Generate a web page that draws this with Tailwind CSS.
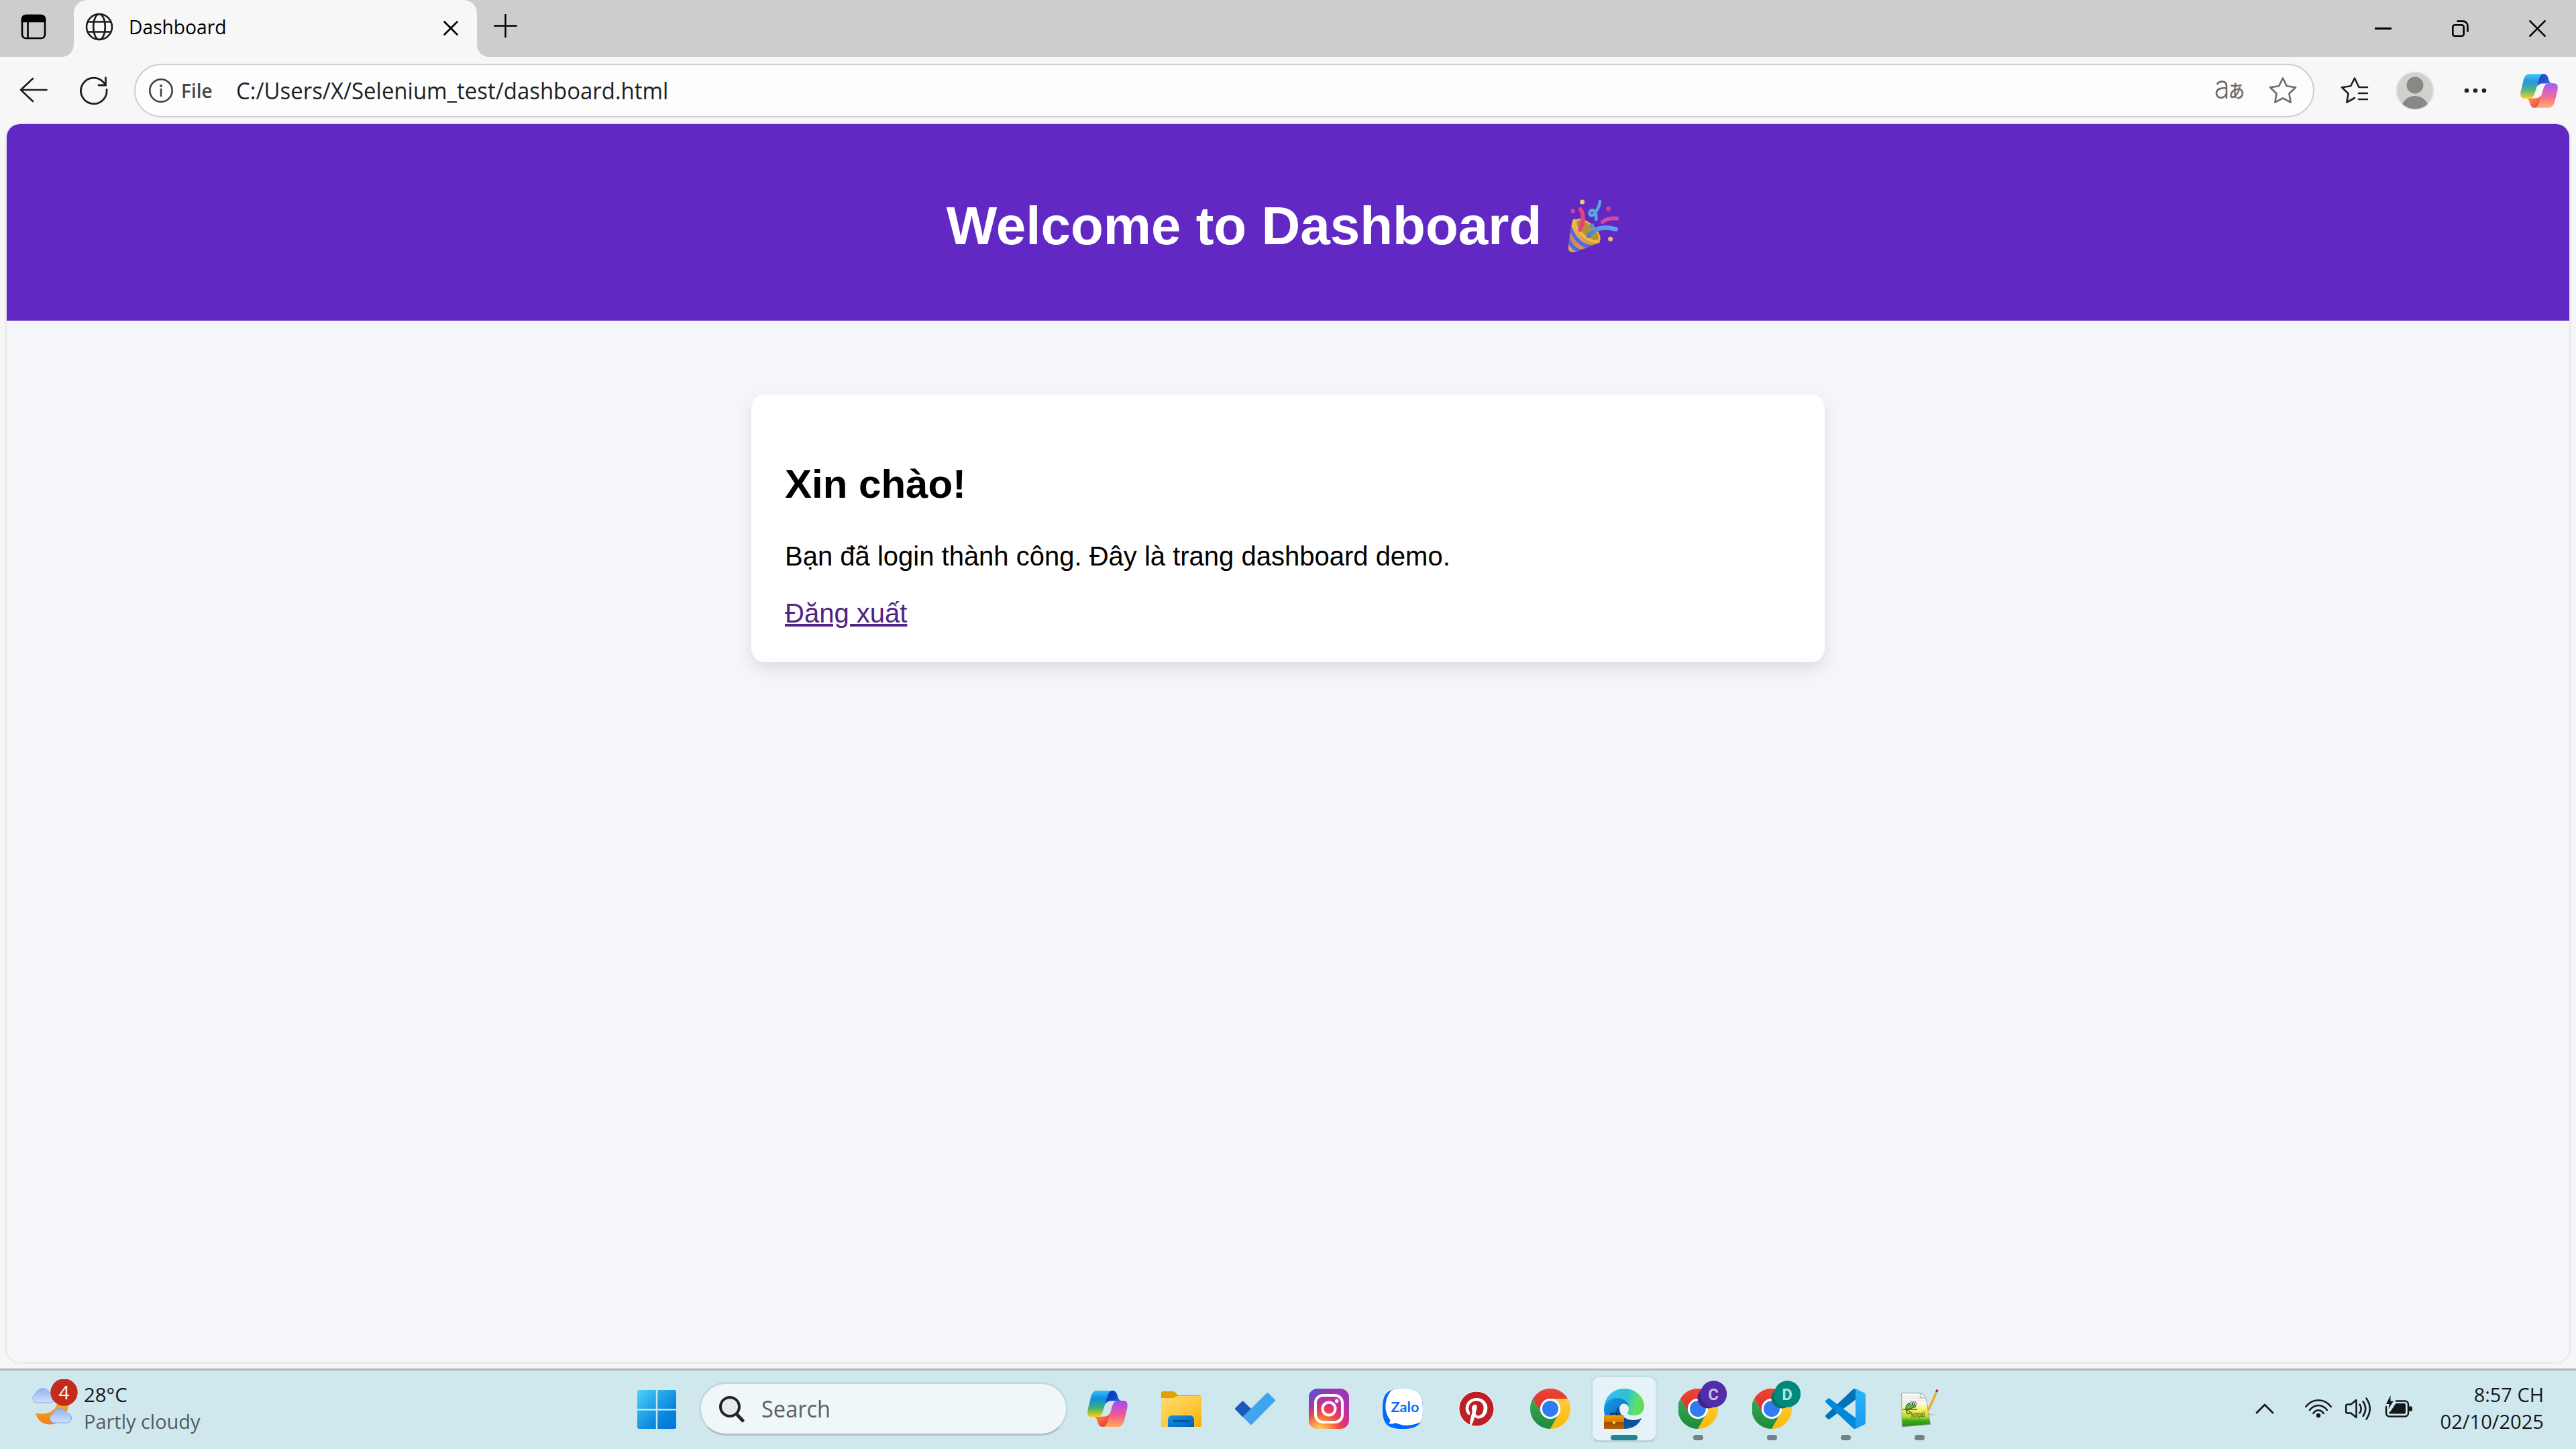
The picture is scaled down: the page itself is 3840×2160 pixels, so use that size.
<!DOCTYPE html>
<html lang="vi">
<head>
<meta charset="utf-8">
<title>Dashboard</title>
<script src="https://cdn.jsdelivr.net/npm/@tailwindcss/browser@4"></script>
</head>
<body class="w-[3840px] h-[2160px] overflow-hidden bg-[#f7f7f7] font-['Open_Sans','Noto_Sans',sans-serif] text-black flex flex-col">

<svg width="0" height="0" class="absolute">
  <defs>
    <linearGradient id="cpL" x1="0" y1="0" x2="0" y2="1"><stop offset="0" stop-color="#35c0f7"/><stop offset=".3" stop-color="#0e8fe0"/><stop offset=".65" stop-color="#3fae78"/><stop offset="1" stop-color="#ffcd0c"/></linearGradient>
    <linearGradient id="cpB" x1="0" y1="0" x2="1" y2="1"><stop offset="0" stop-color="#0a35c4"/><stop offset=".5" stop-color="#1142c8"/><stop offset="1" stop-color="#1c86ee"/></linearGradient>
    <linearGradient id="cpR" x1="0" y1="0" x2="0" y2="1"><stop offset="0" stop-color="#a04be9"/><stop offset=".25" stop-color="#c252cf"/><stop offset=".55" stop-color="#f25b8c"/><stop offset="1" stop-color="#ffab5c"/></linearGradient>
    <linearGradient id="cpO" x1="0" y1="0" x2="1" y2="1"><stop offset="0" stop-color="#ff9b4a"/><stop offset=".5" stop-color="#fb6338"/><stop offset="1" stop-color="#cf3238"/></linearGradient>
    <symbol id="copilot" viewBox="0 0 60 54">
      <path fill="url(#cpB)" d="M37 0C42 0 43.500 3 45 8C46.300 13 48 15 52 15.300H36C31 15.300 29 17 27 20L27 6C29 2 32 0 37 0Z"/>
      <path fill="url(#cpO)" d="M23 54C18 54 16.500 51 15 46C13.700 41 12 39 8 38.700H24C29 38.700 31 37 33 34V48C31 52 28 54 23 54Z"/>
      <path fill="url(#cpL)" d="M14.500 0H38C33.500 0 31.600 3 30 8L23 31C21 37 18.500 39 14 39H6C.8 39-.4 34.500.6 28L5.500 8C7.500 2.500 10 0 14.500 0Z"/>
      <path fill="url(#cpR)" d="M45.500 54H22C26.500 54 28.400 51 30 46L37 23C39 17 41.500 15 46 15H54C59.200 15 60.400 19.500 59.400 26L54.500 46C52.500 51.500 50 54 45.500 54Z"/>
    </symbol>
    <linearGradient id="chR" x1="0" y1="0" x2="0" y2="1"><stop offset="0" stop-color="#ee4436"/><stop offset="1" stop-color="#d8302a"/></linearGradient>
    <linearGradient id="chG" x1="0" y1="0" x2="0" y2="1"><stop offset="0" stop-color="#37a952"/><stop offset="1" stop-color="#1e8a3c"/></linearGradient>
    <linearGradient id="chY" x1="0" y1="0" x2="0" y2="1"><stop offset="0" stop-color="#ffcc3e"/><stop offset="1" stop-color="#fcb905"/></linearGradient>
    <symbol id="chrome" viewBox="0 0 60 60">
      <path fill="url(#chR)" d="M4 15A30 30 0 0 1 56 15H30A15 15 0 0 0 17 37.500Z"/>
      <path fill="url(#chG)" d="M4 15A30 30 0 0 0 30 60L43 37.500A15 15 0 0 1 17 37.500Z"/>
      <path fill="url(#chY)" d="M56 15A30 30 0 0 1 30 60L43 37.500A15 15 0 0 0 30 15Z"/>
      <circle cx="30" cy="30" r="15" fill="#fff"/><circle cx="30" cy="30" r="12" fill="#2f7cf0"/>
    </symbol>
    <linearGradient id="cloudFill" x1="0" y1="0" x2="0" y2="1"><stop offset="0" stop-color="#8fb3f3"/><stop offset="1" stop-color="#d3e0f8"/></linearGradient>
    <symbol id="cloud" viewBox="0 0 36 23">
      <path fill="url(#cloudFill)" stroke="#86a8ea" stroke-width="1" d="M8 22A7 7 0 0 1 6.500 8.500A10.500 10.500 0 0 1 26.500 7.500A7.300 7.300 0 0 1 28 22Z"/>
    </symbol>
  </defs>
</svg>

<!-- Tab strip -->
<div class="h-[85px] shrink-0 bg-[#cdcdcd] flex items-stretch">
  <div class="w-[110px] flex items-center pl-[31px] relative">
    <svg class="w-[38px] h-[38px] -mt-[5px]" viewBox="0 0 38 38" fill="none" stroke="#000" stroke-width="2.600"><rect x="2" y="2" width="34" height="34" rx="5.500"/><path d="M2 11V7.500A5.500 5.500 0 0 1 7.500 2H30.500A5.500 5.500 0 0 1 36 7.500V11Z" fill="#000"/><path d="M10.500 11V36"/></svg>
    <svg class="absolute right-0 bottom-0 w-[16px] h-[20px]" viewBox="0 0 16 20"><path fill="#f7f7f7" d="M16 0V20H0C10 18 16 11 16 0Z"/></svg>
  </div>
  <div class="w-[601px] bg-[#f7f7f7] rounded-t-[20px] flex items-center pl-[17px] pr-[27px] pb-[5px]">
    <svg class="w-[42px] h-[42px]" viewBox="0 0 42 42" fill="none" stroke="#1b1b1b" stroke-width="2.600"><circle cx="21" cy="21" r="19"/><ellipse cx="21" cy="21" rx="8.800" ry="19"/><path d="M3.500 13.500H38.500M3.500 28.500H38.500"/></svg>
    <div class="ml-[23px] w-[300px] text-[30px] leading-[40px] whitespace-nowrap origin-left scale-x-[0.94]">Dashboard</div>
    <svg class="ml-auto w-[24px] h-[24px] mt-[3px]" viewBox="0 0 24 24" stroke="#000" stroke-width="2.600" stroke-linecap="round"><path d="M2.500 2.500L21.500 21.500M21.500 2.500L2.500 21.500"/></svg>
  </div>
  <div class="flex-1 flex items-center pl-[25px] relative">
    <svg class="absolute left-0 bottom-0 w-[16px] h-[20px]" viewBox="0 0 16 20"><path fill="#f7f7f7" d="M0 0V20H16C6 18 0 11 0 0Z"/></svg>
    <svg class="w-[35px] h-[35px] -mt-[8px]" viewBox="0 0 35 35" stroke="#000" stroke-width="2.500" stroke-linecap="round"><path d="M17.500 1V34M1 17.500H34"/></svg>
    <div class="ml-auto flex items-center gap-[90px] pr-[45px]">
      <svg class="w-[25px] h-[25px]" viewBox="0 0 25 25"><rect y="11" width="25" height="3"/></svg>
      <svg class="w-[25px] h-[25px]" viewBox="0 0 25 25" fill="none" stroke="#000" stroke-width="2.600"><rect x="1.300" y="7.300" width="16.400" height="16.400" rx="3"/><path d="M7.500 1.600H16.500A7 7 0 0 1 23.500 8.600V17.500"/></svg>
      <svg class="w-[25px] h-[25px]" viewBox="0 0 25 25" stroke="#000" stroke-width="2.600"><path d="M.5.5L24.500 24.500M24.500.5L.5 24.500"/></svg>
    </div>
  </div>
</div>

<!-- Toolbar -->
<div class="h-[100px] shrink-0 flex items-center pl-[29px] pr-[27px]">
  <svg class="w-[42px] h-[38px] -mt-[3px]" viewBox="0 0 42 38" fill="none" stroke="#1f1f1f" stroke-width="2.600" stroke-linecap="round" stroke-linejoin="round"><path d="M40.500 19H2M20 2L2 19L20 36"/></svg>
  <svg class="w-[42px] h-[42px] ml-[48px]" viewBox="0 0 42 42" fill="none" stroke="#1f1f1f" stroke-width="2.800" stroke-linecap="round"><path d="M40 19.500A19.300 19.300 0 1 1 36 9.500L38.500 13M38.500 2V13H28"/></svg>
  <div class="ml-[39px] w-[3250px] h-[80px] rounded-full border-[2.500px] border-[#cecece] bg-[#fdfdfd] flex items-center pl-[19px] pr-[24px] text-[#1f1f1f]">
    <svg class="w-[38px] h-[38px]" viewBox="0 0 38 38" fill="none" stroke="#3f3f3f" stroke-width="2.600"><circle cx="19" cy="19" r="16.700"/><path d="M19 17V27" stroke-linecap="round"/><circle cx="19" cy="12" r="1.900" fill="#3f3f3f" stroke="none"/></svg>
    <div class="ml-[11px] w-[82px] text-[28.500px] leading-[40px] font-semibold text-[#484848] origin-left scale-x-[0.98]">File</div>
    <div class="text-[35px] leading-[48px] whitespace-nowrap origin-left scale-x-[0.941]">C:/Users/X/Selenium_test/dashboard.html</div>
    <svg class="ml-auto w-[46px] h-[34px] shrink-0 -mt-[2px]" viewBox="0 0 46 34" fill="none" stroke="#6b6b6b" stroke-width="2.700" stroke-linecap="round"><path d="M3.500 8C6 3.500 17 2.500 17 11V29M17 14C7 14 2 16 2 22C2 31 15 30.500 17 22"/><text x="20" y="29" font-size="27" fill="#6b6b6b" stroke="#6b6b6b" stroke-width=".6" textLength="24" lengthAdjust="spacingAndGlyphs" font-family="Noto Sans CJK JP, sans-serif">あ</text></svg>
    <svg class="w-[42px] h-[42px] shrink-0 ml-[34px]" viewBox="0 0 42 42" fill="none" stroke="#6b6b6b" stroke-width="2.600" stroke-linejoin="round"><path d="M21 2.500L26.800 14.300L40 16.300L30.400 25.500L32.700 38.500L21 32.300L9.300 38.500L11.600 25.500L2 16.300L15.200 14.300Z"/></svg>
  </div>
  <svg class="w-[42px] h-[42px] ml-[39px]" viewBox="0 0 42 42" fill="none" stroke="#1f1f1f" stroke-width="2.600" stroke-linejoin="round" stroke-linecap="round"><path d="M40 16H27.500L21 2.500L15.200 14.300L2 16.300L11.600 25.500L9.300 38.500L21 32M27 25H40M27 34H40"/></svg>
  <svg class="w-[58px] h-[66px] ml-[40px]" viewBox="0 0 58 66"><defs><clipPath id="av"><circle cx="29" cy="33" r="27.500"/></clipPath></defs><ellipse cx="29" cy="33" rx="28.500" ry="28.500" fill="#e2e1df"/><circle cx="29" cy="33" r="26.500" fill="#d2d0cd"/><g clip-path="url(#av)" fill="#8a8886"><circle cx="29" cy="25" r="12.500"/><circle cx="29" cy="62" r="21"/></g></svg>
  <svg class="w-[34px] h-[10px] ml-[44px]" viewBox="0 0 34 10" fill="#1f1f1f"><circle cx="4" cy="5" r="3.300"/><circle cx="17" cy="5" r="3.300"/><circle cx="30" cy="5" r="3.300"/></svg>
  <svg class="w-[56px] h-[51px] ml-auto opacity-90"><use href="#copilot"/></svg>
</div>

<!-- Page -->
<div class="h-[1855px] shrink-0 px-[10px] pb-[9px]">
  <div class="h-full rounded-[20px] overflow-hidden bg-[#f4f6fa] shadow-[0_0_3px_1px_rgba(0,0,0,0.12)] font-['Liberation_Sans',Arial,sans-serif]">
    <header class="h-[293px] bg-[#6128c3] text-white flex justify-center pt-[106px] pr-[3px]">
      <h1 class="text-[80px] leading-[92px] font-bold whitespace-nowrap">Welcome to Dashboard</h1>
      <svg class="w-[100px] h-[100px] ml-[28px] -mt-[6px] shrink-0" viewBox="0 0 300 300" fill="none" stroke-linecap="round">
        <defs>
          <linearGradient id="cone" x1="0" y1="0" x2="1" y2="1"><stop offset="0" stop-color="#f6c544"/><stop offset="1" stop-color="#c57f58"/></linearGradient>
          <clipPath id="coneClip"><path d="M62 124C52 125 50 150 36 250C34 268 44 276 62 273C100 262 140 240 176 232C190 224 110 130 62 124Z"/></clipPath>
          <linearGradient id="bl" x1="0" y1="1" x2="1" y2="0"><stop offset="0" stop-color="#4880cc"/><stop offset="1" stop-color="#62a8ee"/></linearGradient>
        </defs>
        <g clip-path="url(#coneClip)">
          <rect x="30" y="115" width="160" height="165" fill="url(#cone)"/>
          <path stroke="#d38a55" stroke-width="18" d="M36 190C60 240 100 262 150 250"/>
          <path stroke="#5068e4" stroke-width="16" d="M46 166C62 212 98 250 140 248"/>
          <path stroke="#5068e4" stroke-width="17" d="M34 208C44 240 64 262 90 268"/>
        </g>
        <ellipse cx="121" cy="177" rx="34" ry="72" transform="rotate(-48 121 177)" fill="#eebb42"/>
        <ellipse cx="122" cy="174" rx="24" ry="62" transform="rotate(-48 122 174)" fill="#b98c36"/>
        <path stroke="#e0457f" stroke-width="19" d="M90 81C106 105 104 140 88 172"/>
        <path stroke="url(#bl)" stroke-width="20" d="M126 200C150 166 190 155 248 170"/>
        <path stroke="#d848a0" stroke-width="17" d="M188 138C205 124 225 119 253 122"/>
        <path stroke="#58a6da" stroke-width="14" d="M177 45C174 75 150 112 136 108C124 100 134 82 148 86C160 90 160 108 160 126"/>
        <circle cx="98" cy="48" r="10.500" fill="#f0d060"/><circle cx="56" cy="89" r="10.500" fill="#cf3fa0"/>
        <circle cx="215" cy="79" r="10.500" fill="#cc3f98"/><circle cx="141" cy="155" r="10" fill="#4f93d0"/>
        <circle cx="224" cy="214" r="10.500" fill="#efbf5c"/>
      </svg>
    </header>
    <main class="w-[1600px] h-[399px] mx-auto mt-[110px] rounded-[20px] bg-white px-[50px] pt-[100px] shadow-[0_10px_25px_rgba(0,0,0,0.1)]">
      <h2 class="text-[60px] leading-[68px] font-bold">Xin chào!</h2>
      <p class="mt-[50px] text-[40px] leading-[46px]">Bạn đã login thành công. Đây là trang dashboard demo.</p>
      <a class="block w-fit mt-[39px] text-[40px] leading-[46px] text-[#4f2485] underline decoration-[4px] underline-offset-[2px]">Đăng xuất</a>
    </main>
  </div>
</div>

<!-- Taskbar -->
<div class="h-[120px] shrink-0 border-t-[3px] border-[#a9b9be] bg-[#cfe8ee] flex items-start text-[#15181a]">
  <div class="w-[949px] flex pt-[21px] pl-[47px]">
    <svg class="w-[75px] h-[75px] -mt-[8px]" viewBox="0 0 75 75">
      <defs><linearGradient id="moon" x1="0" y1="0" x2="0" y2="1"><stop offset="0" stop-color="#f2c02e"/><stop offset="1" stop-color="#f28118"/></linearGradient></defs>
      <path fill="url(#moon)" d="M54 22C59 50 47 67 27 67.500C15 67 8 60 6 50C26 55 36 46 39 34Z"/>
      <use href="#cloud" x="0" y="13" width="36" height="23"/><use href="#cloud" x="25.500" y="43" width="36" height="23"/>
      <circle cx="48.500" cy="19.500" r="20.200" fill="#c42b1c"/>
      <text x="48.500" y="30" font-size="28" text-anchor="middle" fill="#fff">4</text>
    </svg>
    <div class="ml-[3px] text-[30px] leading-[40px] -mt-[5px] whitespace-nowrap origin-left">
      <div class="origin-left scale-x-[0.98]">28°C</div>
      <div class="text-[#505c60] origin-left scale-x-[0.965]">Partly cloudy</div>
    </div>
  </div>
  <svg class="w-[60px] h-[60px] mt-[28px]" viewBox="0 0 60 60">
    <defs><linearGradient id="win" gradientUnits="userSpaceOnUse" x1="0" y1="0" x2="60" y2="60"><stop offset="0" stop-color="#4fd4ff"/><stop offset=".35" stop-color="#28a9ea"/><stop offset=".7" stop-color="#0a82dc"/><stop offset="1" stop-color="#0075d2"/></linearGradient></defs>
    <path fill="url(#win)" d="M4 1H28.800V29H1V4A3 3 0 0 1 4 1ZM31.200 1H56A3 3 0 0 1 59 4V29H31.200ZM1 31.500H28.800V59H4A3 3 0 0 1 1 56ZM31.200 31.500H59V56A3 3 0 0 1 56 59H31.200Z"/>
  </svg>
  <div class="ml-[33px] mt-[17px] w-[550px] h-[80px] rounded-full border-[3px] border-[#c3d9df] border-b-[#adc1c7] bg-[#eff7f9] flex items-center pl-[26px]">
    <svg class="w-[40px] h-[42px]" viewBox="0 0 40 42" fill="none" stroke="#242424" stroke-width="4"><circle cx="17" cy="18" r="14" fill="#e3ebf0"/><path d="M27 29L36 38.500" stroke-width="5" stroke-linecap="round"/></svg>
    <div class="ml-[24px] text-[35px] leading-[48px] text-[#5b6163] origin-left scale-x-[0.93]">Search</div>
  </div>

  <div class="flex items-start ml-[4px]">
    <div class="w-[110px] h-[117px] flex justify-center pt-[30px]"><svg class="w-[60px] h-[54px]"><use href="#copilot"/></svg></div>
    <div class="w-[110px] h-[117px] flex justify-center pt-[27px]">
      <svg class="w-[60px] h-[60px]" viewBox="0 0 60 60">
        <defs><linearGradient id="fo" x1="0" y1="0" x2="1" y2="1"><stop offset="0" stop-color="#ffdb6e"/><stop offset=".6" stop-color="#fdc63a"/><stop offset="1" stop-color="#f5b000"/></linearGradient><linearGradient id="fb" x1="0" y1="0" x2="1" y2="1"><stop offset="0" stop-color="#1795e0"/><stop offset="1" stop-color="#005fb8"/></linearGradient></defs>
        <path fill="#e0a104" d="M2 4H17C21 4 23 8 24.500 10H58L60 12V30H0V6Q0 4 2 4Z"/>
        <path fill="url(#fo)" d="M0 14H17C20 14 22 11 25 11H58Q60 11 60 13V55Q60 57 58 57H2Q0 57 0 55Z"/>
        <path fill="url(#fb)" d="M10 57V46A6 6 0 0 1 16 40H43A6 6 0 0 1 49 46V57Z"/><path stroke="#0c4a8e" stroke-width="2.400" stroke-linecap="round" d="M19 48.500H41"/>
      </svg>
    </div>
    <div class="w-[110px] h-[117px] flex justify-center pt-[27px]">
      <svg class="w-[60px] h-[60px]" viewBox="0 0 60 60" stroke-linejoin="round" stroke-width="3"><path fill="#185abd" stroke="#185abd" d="M11.500 20L22.500 30.500L12 41L1.500 30Z"/><path fill="#41a5ee" stroke="#41a5ee" d="M13.500 42L48.500 7.500L58.500 17.500L24 52.500Z"/></svg>
    </div>
    <div class="w-[110px] h-[117px] flex justify-center pt-[27px]">
      <svg class="w-[60px] h-[60px]" viewBox="0 0 60 60">
        <defs><radialGradient id="ig1" cx=".28" cy="1.050" r="1"><stop offset="0" stop-color="#ffdf7c"/><stop offset=".15" stop-color="#fdb04c"/><stop offset=".45" stop-color="#f4503c"/><stop offset=".65" stop-color="#d9307f"/><stop offset="1" stop-color="#a234b4"/></radialGradient><linearGradient id="ig2" x1="0" y1="0" x2=".45" y2=".4"><stop offset="0" stop-color="#4560d8"/><stop offset="1" stop-color="#7a35c0" stop-opacity="0"/></linearGradient></defs>
        <rect width="60" height="60" rx="13" fill="url(#ig1)"/><rect width="60" height="60" rx="13" fill="url(#ig2)"/>
        <rect x="10" y="10" width="40" height="40" rx="11" fill="none" stroke="#fff" stroke-width="4"/><circle cx="30" cy="30" r="9.500" fill="none" stroke="#fff" stroke-width="4"/><circle cx="41.700" cy="18.500" r="2.700" fill="#fff"/>
      </svg>
    </div>
    <div class="w-[110px] h-[117px] flex justify-center pt-[27px]">
      <svg class="w-[60px] h-[60px]" viewBox="0 0 60 60">
        <path fill="#0068ff" d="M30 0C53 0 60 7 60 30S53 60 30 60S0 53 0 30S7 0 30 0Z"/>
        <path fill="#fff" d="M13 3C18 0 23 0 30 0C53 0 60 7 60 30C60 40 59 46 56 50C44 56 30 56 19 51C16 52.500 13 53 9 52C11 50 12 48 11 46C1 34 3 14 13 3Z"/>
        <text x="33.500" y="34.500" text-anchor="middle" font-size="20" font-weight="700" fill="#0a6cff" textLength="42" lengthAdjust="spacingAndGlyphs" font-family="Lato, sans-serif">Zalo</text>
      </svg>
    </div>
    <div class="w-[110px] h-[117px] flex justify-center pt-[27px]">
      <svg class="w-[60px] h-[60px]" viewBox="0 0 60 60"><circle cx="30" cy="30" r="26.500" fill="#fff"/><path fill="#bd1f26" transform="translate(4.400 4.400) scale(2.133)" d="M12.017 0C5.396 0 .029 5.367.029 11.987c0 5.079 3.158 9.417 7.618 11.162-.105-.949-.199-2.403.041-3.439.219-.937 1.406-5.957 1.406-5.957s-.359-.72-.359-1.781c0-1.663.967-2.911 2.168-2.911 1.024 0 1.518.769 1.518 1.688 0 1.029-.653 2.567-.992 3.992-.285 1.193.6 2.165 1.775 2.165 2.128 0 3.768-2.245 3.768-5.487 0-2.861-2.063-4.869-5.008-4.869-3.410 0-5.409 2.562-5.409 5.199 0 1.033.394 2.143.889 2.741.099.120.112.225.085.345-.090.375-.293 1.199-.334 1.363-.053.225-.172.271-.401.165-1.495-.690-2.433-2.878-2.433-4.646 0-3.776 2.748-7.252 7.920-7.252 4.158 0 7.392 2.967 7.392 6.923 0 4.135-2.607 7.462-6.233 7.462-1.214 0-2.354-.629-2.758-1.379l-.749 2.848c-.269 1.045-1.004 2.352-1.498 3.146 1.123.345 2.306.535 3.550.535 6.607 0 11.985-5.365 11.985-11.987C23.970 5.390 18.592.026 11.985.026L12.017 0z"/></svg>
    </div>
    <div class="w-[110px] h-[117px] flex justify-center pt-[27px]"><svg class="w-[60px] h-[60px]"><use href="#chrome"/></svg></div>
    <div class="w-[110px] h-[117px] flex justify-center pt-[7px]">
      <div class="w-[100px] h-[100px] rounded-[13px] border-[3px] border-[#c8dfe5] border-b-[#bad1d8] bg-[#e5f2f7] flex flex-col items-center pt-[17px]">
        <svg class="w-[60px] h-[60px] shrink-0" viewBox="0 0 60 60">
          <defs>
            <linearGradient id="eg1" x1="0" y1=".3" x2="1" y2=".5"><stop offset="0" stop-color="#36b9fb"/><stop offset=".55" stop-color="#2cc4d0"/><stop offset=".85" stop-color="#62e066"/><stop offset="1" stop-color="#5fdb55"/></linearGradient>
            <linearGradient id="eg2" x1="0" y1="0" x2=".8" y2="1"><stop offset="0" stop-color="#1b9de2"/><stop offset=".5" stop-color="#0b74cb"/><stop offset="1" stop-color="#0c4f96"/></linearGradient>
            <linearGradient id="bc" x1="0" y1="0" x2="0" y2="1"><stop offset="0" stop-color="#f39b07"/><stop offset=".52" stop-color="#d67800"/><stop offset=".54" stop-color="#9c4c00"/><stop offset="1" stop-color="#b76200"/></linearGradient>
          </defs>
          <path fill="url(#eg1)" d="M0 29C1 12 14 0 30 0C48 0 60 13 60 26C60 35 53 40 45 40C39 40 35 38.500 35 37L34 30L20 16C10 13 3 19 0 29Z"/>
          <path fill="url(#eg2)" d="M0 31C1 19 10 14 19 14C28 14 34 18 37 25L30 30L33 43C40 48 48 47 56 44C51 55 42 60 30 60C13 60 0 47 0 31Z"/>
          <path fill="#0d5299" d="M26 25C19 28 16 34 18 41C22 52 32 56 40 57.500C48 55 53 50 56 44C48 48 38 47 31 42C25 37 22 31 26 25Z"/>
          <path fill="#e5f2f7" d="M23 30C23 25 26 22.500 30 22.500C34 22.500 37 26 37 30.500C37 34 34.500 35 35 37C36 40 43 41 48 40L60 37V41C57 45 51 47.500 44 47.500C32 47 23 39 23 30Z"/>
          <path fill="#0d5299" d="M56 44C49 47.500 40 48 33 45L38 57C46 55 52 51 56 44Z"/>
          <path fill="none" stroke="#2b2b2b" stroke-width="2.600" d="M10.500 40V38.500Q10.500 37 12.500 37H17.500Q19.500 37 19.500 38.500V40"/>
          <rect y="39.500" width="30" height="20.500" rx="1.200" fill="url(#bc)"/><rect x="13" y="48.500" width="4" height="4" fill="#ffd428"/>
        </svg>
        <div class="mt-[9px] w-[40px] h-[8px] shrink-0 rounded-full bg-[#258293]"></div>
      </div>
    </div>
    <div class="w-[110px] h-[117px] flex flex-col items-center pt-[15px]">
      <svg class="w-[72px] h-[72px] shrink-0 ml-[14px]" viewBox="0 0 72 72"><use href="#chrome" y="12" x="-1" width="60" height="60"/><circle cx="44" cy="26" r="15.500" fill="#43218f"/><circle cx="52.500" cy="20" r="19.700" fill="#512da8"/><text x="52" y="28.500" text-anchor="middle" font-size="24" font-weight="700" fill="#cdbfe8" font-family="Roboto, sans-serif">C</text></svg>
      <div class="mt-[9px] w-[15px] h-[8px] rounded-full bg-[#738286]"></div>
    </div>
    <div class="w-[110px] h-[117px] flex flex-col items-center pt-[15px]">
      <svg class="w-[72px] h-[72px] shrink-0 ml-[14px]" viewBox="0 0 72 72"><use href="#chrome" y="12" x="-1" width="60" height="60"/><circle cx="44" cy="26" r="15.500" fill="#007567"/><circle cx="52.500" cy="20" r="19.700" fill="#00897b"/><text x="52" y="28.500" text-anchor="middle" font-size="24" font-weight="700" fill="#b5e2dc" font-family="Roboto, sans-serif">D</text></svg>
      <div class="mt-[9px] w-[15px] h-[8px] rounded-full bg-[#738286]"></div>
    </div>
    <div class="w-[110px] h-[117px] flex flex-col items-center pt-[27px]">
      <svg class="w-[60px] h-[60px] shrink-0" viewBox="0 0 60 60">
        <defs><linearGradient id="vs" x1="0" y1="0" x2="0" y2="1"><stop offset="0" stop-color="#2bb4f6"/><stop offset="1" stop-color="#1f98f0"/></linearGradient></defs>
        <path fill="#0073b7" d="M41.500.8Q43 0 45 0V16.500L6.500 45.300Q5 46.300 3.600 45L.6 42.300Q-.6 41 .6 39.500Z"/>
        <path fill="#0089d8" d="M6.500 14.700L45 43.500V60Q43 60 41.500 59.200L.6 20.500Q-.6 19 .6 17.700L3.600 15Q5 13.700 6.500 14.700Z"/>
        <path fill="url(#vs)" d="M45 0L58 6.300Q60 7.300 60 9.500V50.500Q60 52.700 58 53.700L45 60Q43.500 60.500 42 59.500Q45 60 45 56.500V3.500Q45 0 42 .5Q43.500-.5 45 0Z"/>
      </svg>
      <div class="mt-[9px] w-[15px] h-[8px] rounded-full bg-[#738286]"></div>
    </div>
    <div class="w-[110px] h-[117px] flex flex-col items-center pt-[17px]">
      <svg class="w-[80px] h-[80px] shrink-0 ml-[8px] -mb-[10px]" viewBox="0 0 240 240">
        <defs><linearGradient id="np" x1="0" y1="0" x2="0" y2="1"><stop offset="0" stop-color="#fbfbfb"/><stop offset=".3" stop-color="#fbfbf0"/><stop offset=".5" stop-color="#f2f25a"/><stop offset=".7" stop-color="#b8dc2c"/><stop offset=".82" stop-color="#3ea81c"/><stop offset="1" stop-color="#1f8c12"/></linearGradient></defs>
        <path fill="url(#np)" stroke="#9aa09c" stroke-width="3" d="M29 50L111 50C128 56 138 68 141 88L158 190L31 201Z"/>
        <path stroke="#d2d4e0" stroke-width="2.500" d="M32 64H110M32 74H134M32 84H138M32 94H90"/>
        <path fill="#f4f4f4" stroke="#9a9a9a" stroke-width="2.500" d="M111 50C115 60 114 68 110 72C120 68 128 70 134 74"/>
        <path fill="#5cb848" stroke="#234a1c" stroke-width="3" d="M48 120C46 98 64 92 78 96C92 98 96 108 88 114C80 118 60 116 56 130"/>
        <path fill="none" stroke="#26381f" stroke-width="3.500" d="M36 124C55 116 75 130 98 121M56 124C44 130 50 146 62 142C72 138 66 128 60 133"/>
        <circle cx="74" cy="97" r="8" fill="#fff" stroke="#222" stroke-width="2.500"/><circle cx="87" cy="97" r="8" fill="#fff" stroke="#222" stroke-width="2.500"/><circle cx="76" cy="98" r="3"/><circle cx="87" cy="98" r="3"/>
        <text x="71" y="160" font-size="36" textLength="62" lengthAdjust="spacingAndGlyphs" fill="#3b4a18" font-family="Liberation Sans, sans-serif" transform="rotate(-4 71 160)">Notepad</text>
        <path d="M146 142L190 150L150 146Z" fill="#98aeb4"/>
        <path stroke="#f2a51a" stroke-width="10" d="M148 128L182 52"/><path stroke="#a9b4bd" stroke-width="10" d="M182 52L185 45"/><path stroke="#a02c38" stroke-width="10" d="M185 45L189 35"/><path fill="#e7c795" d="M143 126L153 130L142 143Z"/>
      </svg>
      <div class="mt-[9px] w-[15px] h-[8px] rounded-full bg-[#738286]"></div>
    </div>
  </div>

  <div class="ml-auto flex pr-[48px]">
    <svg class="w-[28px] h-[17px] mt-[48px]" viewBox="0 0 28 17" fill="none" stroke="#15181a" stroke-width="2.800" stroke-linecap="round" stroke-linejoin="round"><path d="M2 15L14 3L26 15"/></svg>
    <svg class="w-[42px] h-[32px] ml-[45px] mt-[40px]" viewBox="0 0 42 32" fill="none" stroke="#15181a" stroke-width="2.500" stroke-linecap="round"><path d="M2.200 14C12.500 1 29.500 1 39.800 14M8 19C15 9.500 27 9.500 34 19M13.300 24C17 17.500 25 17.500 28.700 24"/><circle cx="21" cy="27" r="3.200" fill="#15181a" stroke="none"/></svg>
    <svg class="w-[42px] h-[36px] ml-[18px] mt-[39px]" viewBox="0 0 42 36" fill="none" stroke="#15181a" stroke-width="2.500" stroke-linecap="round" stroke-linejoin="round"><path d="M17.500 5V31L9.500 24.500H4.500Q2.200 24.500 2.200 22V14Q2.200 11.500 4.500 11.500H9.500ZM22.500 11.500Q27 18 22.500 24.500M27.500 7Q35 18 27.500 29M32.500 2.500Q43 18 32.500 33.500"/></svg>
    <svg class="w-[42px] h-[36px] ml-[18px] mt-[36px]" viewBox="0 0 42 36"><path d="M17 9.500H30A5 5 0 0 1 35 14.500V27.500A5 5 0 0 1 30 32.500H7A5 5 0 0 1 2 27.500V18" fill="none" stroke="#15181a" stroke-width="2.500" stroke-linecap="round"/><path fill="#15181a" d="M16.500 13H29Q31 13 31 15V26.500Q31 28.500 29 28.500H6.500Q6 25 8 25.500ZM36 17.500H39Q41 17.500 41 19.500V22.500Q41 24.500 39 24.500H36ZM8.500 1L2 14H6.500L5.500 21L13 9.500H8.500Z"/></svg>
    <div class="ml-[30px] w-[165px] mt-[16px] text-[30px] leading-[40px] text-right whitespace-nowrap">
      <div class="origin-right scale-x-[0.965]">8:57 CH</div>
      <div class="origin-right scale-x-[0.97]">02/10/2025</div>
    </div>
  </div>
</div>
</body>
</html>
